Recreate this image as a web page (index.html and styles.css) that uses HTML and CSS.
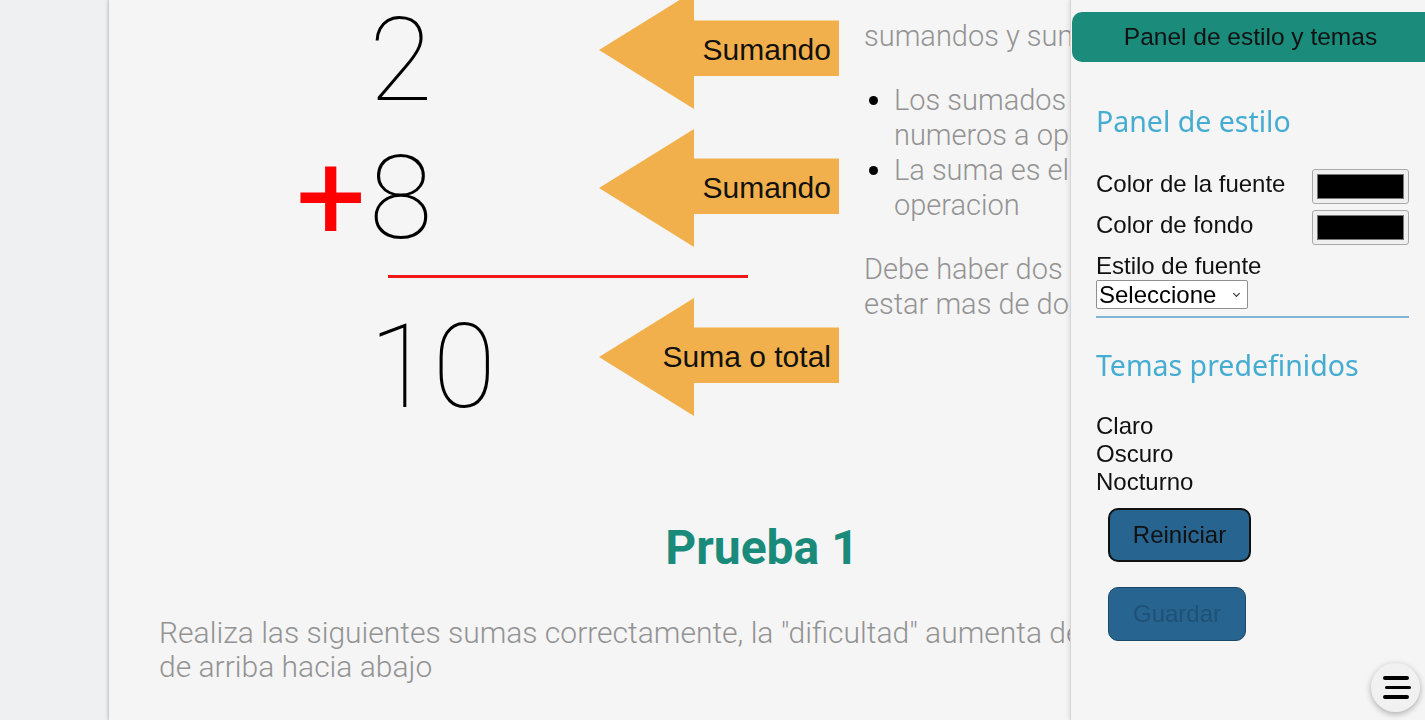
FILE: index.html
```html
<!DOCTYPE html>
<html lang="es">
<head>
<meta charset="utf-8">
<title>Suma</title>
<link rel="stylesheet" href="styles.css">
</head>
<body>
<main class="page">
  <section class="intro">
    <div class="figure">
      <div class="sum-row">
        <span class="sign"></span>
        <span class="num">2</span>
        <div class="arrow"><span class="arrow-label">Sumando</span></div>
      </div>
      <div class="sum-row">
        <span class="sign">+</span>
        <span class="num">8</span>
        <div class="arrow"><span class="arrow-label">Sumando</span></div>
      </div>
      <div class="rule"></div>
      <div class="sum-row">
        <span class="sign"></span>
        <span class="num">10</span>
        <div class="arrow"><span class="arrow-label">Suma o total</span></div>
      </div>
    </div>
    <div class="explain">
      <p>sumandos y sumas.</p>
      <ul>
        <li>Los sumados son los distintos numeros a operar</li>
        <li>La suma es el resultado de la operacion</li>
      </ul>
      <p>Debe haber dos sumandos, pueden estar mas de dos</p>
    </div>
  </section>
  <h2 class="test-title">Prueba 1</h2>
  <p class="test-desc">Realiza las siguientes sumas correctamente, la "dificultad" aumenta de forma progresiva de arriba hacia abajo</p>
</main>

<aside class="panel">
  <div class="panel-tab">Panel de estilo y temas</div>
  <div class="panel-body">
    <h3 class="panel-heading">Panel de estilo</h3>
    <div class="field">
      <label for="fc">Color de la fuente</label>
      <input id="fc" class="swatch" type="color" value="#000000">
    </div>
    <div class="field">
      <label for="bc">Color de fondo</label>
      <input id="bc" class="swatch" type="color" value="#000000">
    </div>
    <div class="field field-stack">
      <label for="ff">Estilo de fuente</label>
      <span class="select-wrap">
        <select id="ff" class="font-select">
          <option>Seleccione</option>
        </select>
      </span>
    </div>
    <hr class="divider">
    <h3 class="panel-heading heading-themes">Temas predefinidos</h3>
    <ul class="themes">
      <li>Claro</li>
      <li>Oscuro</li>
      <li>Nocturno</li>
    </ul>
    <button class="btn btn-reset">Reiniciar</button>
    <button class="btn btn-save">Guardar</button>
  </div>
</aside>

<button class="menu-btn" aria-label="Menu">
  <span class="bar"></span>
  <span class="bar bar-mid"></span>
  <span class="bar"></span>
</button>
</body>
</html>
```

FILE: styles.css
```css
html, body {
  margin: 0;
  padding: 0;
  height: 100%;
}

body {
  background: #eef0f2;
  overflow: hidden;
  font-family: Roboto, "Liberation Sans", sans-serif;
}

.page {
  display: flow-root;
  margin-left: 108px;
  width: 1206px;
  height: 100%;
  padding: 0 50px;
  background: #f5f5f5;
  border-left: 1px solid #cdcdcd;
  box-shadow: -1px 0 3px rgba(0, 0, 0, 0.12);
}

.intro {
  display: flex;
  margin-top: -9px;
}

.figure {
  width: 680px;
  flex: none;
}

.sum-row {
  display: flex;
  align-items: center;
  height: 118px;
}

.sum-row + .sum-row {
  margin-top: 20px;
}

.sign {
  box-sizing: border-box;
  width: 210px;
  padding-right: 3px;
  padding-top: 20px;
  text-align: right;
  color: #ff0000;
  font-size: 124px;
  line-height: 118px;
  font-weight: 400;
}

.num {
  width: 230px;
  padding-top: 20px;
  font-size: 116px;
  line-height: 118px;
  font-weight: 100;
  color: #000;
}

.arrow {
  position: relative;
  box-sizing: border-box;
  width: 240px;
  height: 118px;
  display: flex;
  align-items: center;
  justify-content: flex-end;
  padding-right: 8px;
}

.arrow::before {
  content: "";
  position: absolute;
  inset: 0;
  background: #f2b04c;
  clip-path: polygon(0 50%, 95px 0, 95px 25%, 100% 25%, 100% 72%, 95px 72%, 95px 100%);
}

.arrow-label {
  position: relative;
  font-family: "Liberation Sans", Arial, sans-serif;
  font-size: 30px;
  color: #111;
}

.rule {
  width: 360px;
  height: 3px;
  margin: 28px 0 20px 229px;
  background: #f01818;
}

.explain {
  width: 480px;
  margin-left: 25px;
  flex: none;
  font-size: 29px;
  line-height: 35px;
  font-weight: 300;
  color: #939393;
}

.explain p {
  margin: 29px 0;
}

.explain p:first-child {
  margin-top: 28px;
}

.explain ul {
  margin: 0;
  padding-left: 30px;
}

.explain li::marker {
  color: #000;
}

.test-title {
  margin: 104px 0 0;
  text-align: center;
  font-size: 48px;
  line-height: 56px;
  font-weight: 700;
  color: #1a8b7b;
}

.test-desc {
  width: 1190px;
  margin: 40px 0 0;
  font-size: 30px;
  line-height: 34px;
  font-weight: 300;
  color: #939393;
}

/* Side panel */
.panel {
  position: fixed;
  top: 0;
  right: 0;
  width: 354px;
  height: 100%;
  background: #f5f5f5;
  border-left: 1px solid #d4d4d4;
  box-shadow: -2px 0 4px rgba(0, 0, 0, 0.08);
  font-family: "Liberation Sans", Arial, sans-serif;
  color: #111;
}

.panel-tab {
  margin: 12px -4px 0 1px;
  height: 50px;
  border-radius: 10px 0 0 10px;
  background: #1b8b7b;
  display: flex;
  align-items: center;
  justify-content: center;
  font-size: 24.5px;
  color: #111;
}

.panel-body {
  padding: 0 16px 0 25px;
}

.panel-heading {
  margin: 43px 0 31px;
  font-family: "Noto Sans", "Liberation Sans", sans-serif;
  font-weight: 400;
  font-size: 28.5px;
  line-height: 33px;
  color: #45acd2;
}

.heading-themes {
  margin: 31px 0 30px;
}

.field {
  display: flex;
  justify-content: space-between;
  align-items: center;
  height: 35px;
  font-size: 24px;
  margin-bottom: 6px;
}

.field label {
  margin-top: -6px;
}

.field-stack {
  display: block;
  height: auto;
  margin-top: 7px;
  margin-bottom: 0;
}

.field-stack label {
  display: block;
  margin: 0;
  line-height: 28px;
}

.swatch {
  box-sizing: border-box;
  width: 97px;
  height: 35px;
  padding: 4px;
  border: 1px solid #a9a9a9;
  border-radius: 3px;
  background: #efefef;
  cursor: pointer;
}

.swatch::-webkit-color-swatch-wrapper {
  padding: 0;
}

.swatch::-webkit-color-swatch {
  border: 1px solid #777;
  border-radius: 0;
}

.select-wrap {
  position: relative;
  display: block;
  width: 152px;
}

.select-wrap::after {
  content: "";
  position: absolute;
  right: 9px;
  top: 11px;
  width: 4px;
  height: 4px;
  border-right: 1.5px solid #222;
  border-bottom: 1.5px solid #222;
  transform: rotate(45deg);
  pointer-events: none;
}

.font-select {
  display: block;
  width: 152px;
  height: 29px;
  padding: 0 2px;
  appearance: none;
  -webkit-appearance: none;
  font-family: "Liberation Sans", Arial, sans-serif;
  font-size: 24px;
  color: #000;
  background: #fff;
  border: 1px solid #8f8f8f;
  border-radius: 2px;
}

.divider {
  margin: 7px 0 0;
  border: 0;
  border-top: 2px solid #80b6d3;
}

.themes {
  list-style: none;
  margin: 0;
  padding: 0;
  font-size: 24px;
  line-height: 28px;
}

.btn {
  display: block;
  box-sizing: border-box;
  margin-left: 12px;
  height: 54px;
  border-radius: 10px;
  background: #27648f;
  font-family: "Liberation Sans", Arial, sans-serif;
  font-size: 24px;
}

.btn-reset {
  width: 143px;
  margin-top: 12px;
  border: 2px solid #111;
  color: #111;
}

.btn-save {
  width: 138px;
  margin-top: 25px;
  border: 1px solid #1b4866;
  color: #1f5176;
}

.menu-btn {
  position: fixed;
  right: 5px;
  bottom: 8px;
  width: 49px;
  height: 49px;
  border: 0;
  border-radius: 50%;
  background: #f1f1f1;
  box-shadow: 0 2px 6px rgba(0, 0, 0, 0.3);
  display: flex;
  flex-direction: column;
  align-items: center;
  justify-content: center;
  gap: 6px;
  padding: 0;
}

.bar {
  display: block;
  width: 26px;
  height: 3.5px;
  border-radius: 2px;
  background: #000;
}

.bar-mid {
  transform: translateX(2px);
}
```
